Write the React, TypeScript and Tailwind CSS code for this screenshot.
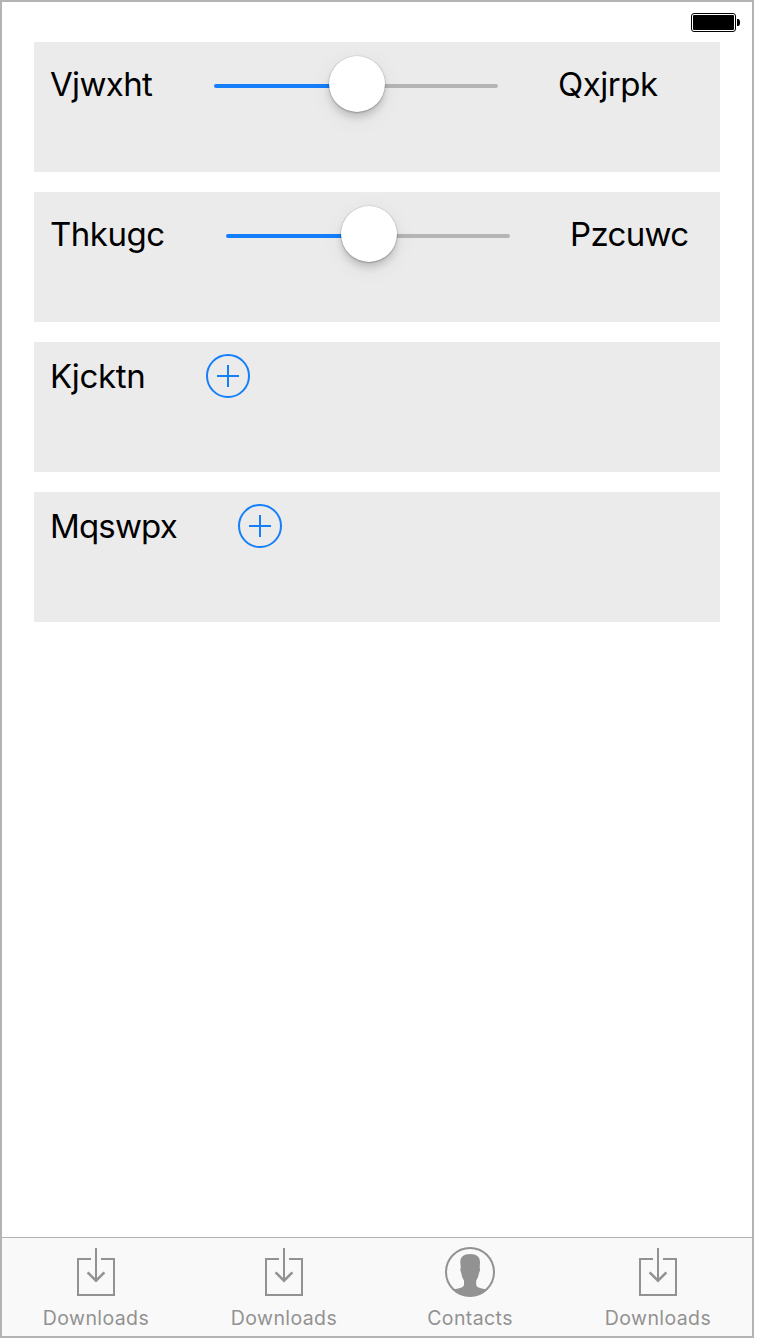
import type { ReactNode } from "react";

function Label({ text, className }: { text: string; className: string }) {
  return (
    <span className={`block shrink-0 whitespace-nowrap text-[33px] leading-10 text-black ${className}`}>
      {text}
    </span>
  );
}

function Slider() {
  return (
    <div className="relative mx-[60px] mt-[14px] h-[60px] w-[284px] shrink-0">
      <div className="flex h-full items-center">
        <div className="h-1 w-1/2 rounded-l-full bg-[#147efb]" />
        <div className="h-1 w-1/2 rounded-r-full bg-[#b5b5b5]" />
      </div>
      <div className="absolute left-[115px] top-0 size-14 rounded-full bg-white shadow-[0_0_1px_0.5px_rgba(0,0,0,0.12),0_1px_2px_rgba(0,0,0,0.2),0_6px_7px_rgba(0,0,0,0.14),0_6px_26px_rgba(0,0,0,0.06)]" />
    </div>
  );
}

function AddButton() {
  return (
    <button className="ml-[60px] mt-3 size-11 shrink-0">
      <svg viewBox="0 0 44 44" className="block size-11" fill="none" stroke="#147efb" strokeWidth="2">
        <circle cx="22" cy="22" r="21" />
        <path d="M11 22H33M22 11V33" />
      </svg>
    </button>
  );
}

function Card({ children }: { children: ReactNode }) {
  return <div className="flex h-[130px] items-start bg-[#ebebeb] pl-4">{children}</div>;
}

function DownloadIcon() {
  return (
    <svg viewBox="0 0 50 50" className="block size-[50px]" fill="none" stroke="#929292" strokeWidth="2">
      <path d="M20 12H7V48H43V12H30" />
      <path d="M25 1V34" />
      <path d="M16.6 25.3L25 33.7L33.4 25.3" strokeWidth="2.5" />
    </svg>
  );
}

function ContactIcon() {
  return (
    <svg viewBox="0 0 50 50" className="block size-[50px]">
      <circle cx="25" cy="25" r="24" fill="none" stroke="#929292" strokeWidth="2" />
      <path
        fill="#929292"
        d="M15.3 15C15.3 10 18.5 7 25 7C32 7 35 10 35 15L34.7 21C35.4 21.3 35.1 24 34 26C33.5 29 32.5 31.5 31.2 33.5V37.5C31.2 40.5 36 41.5 42 42.5C37 47.5 31 49 25 49C19 49 13 47.5 8 42.5C14 41.5 19 40.5 19 37.5V33.5C17.7 31.5 16.8 29 16.3 26C15.3 24 14.9 21.5 15.8 21Z"
      />
    </svg>
  );
}

function Tab({ label, icon, className }: { label: string; icon: ReactNode; className: string }) {
  return (
    <div className={`flex shrink-0 flex-col items-center pt-[9px] ${className}`}>
      {icon}
      <span className="mt-[9px] text-[19.5px] leading-6 tracking-[0.4px] text-[#929292]">{label}</span>
    </div>
  );
}

export default function App() {
  return (
    <div className="h-[1340px] w-[760px] bg-white font-['Inter',sans-serif]">
      <div className="flex h-[1338px] w-[754px] flex-col border-2 border-[#b3b3b3] bg-white">
        <header className="flex h-10 items-start justify-end pr-3 pt-[11px]">
          <svg viewBox="0 0 49 19" className="block h-[19px] w-[49px]">
            <rect x="0.5" y="0.5" width="44" height="18" rx="2.5" fill="white" stroke="black" />
            <rect x="2" y="2" width="41" height="15" rx="1" fill="black" />
            <path d="M46 6H47Q49 6 49 9.5T47 13H46Z" fill="black" />
          </svg>
        </header>
        <main className="flex flex-1 flex-col gap-5 px-8">
          <Card>
            <Label text="Vjwxht" className="mt-[22px] w-[104px] tracking-[-0.65px]" />
            <Slider />
            <Label text="Qxjrpk" className="mt-[22px] tracking-[-0.5px]" />
          </Card>
          <Card>
            <Label text="Thkugc" className="mt-[22px] w-[116px] tracking-[-0.5px]" />
            <Slider />
            <Label text="Pzcuwc" className="mt-[22px] tracking-[-0.65px]" />
          </Card>
          <Card>
            <Label text="Kjcktn" className="mt-[14px] w-[96px] tracking-[-0.35px]" />
            <AddButton />
          </Card>
          <Card>
            <Label text="Mqswpx" className="mt-[14px] w-[128px] tracking-[-0.85px]" />
            <AddButton />
          </Card>
        </main>
        <nav className="flex h-[99px] border-t border-[#b2b2b2] bg-[#f9f9f9]">
          <Tab label="Downloads" icon={<DownloadIcon />} className="w-[188px]" />
          <Tab label="Downloads" icon={<DownloadIcon />} className="w-[188px]" />
          <Tab label="Contacts" icon={<ContactIcon />} className="w-[184px]" />
          <Tab label="Downloads" icon={<DownloadIcon />} className="w-[190px] pl-[2px]" />
        </nav>
      </div>
    </div>
  );
}
